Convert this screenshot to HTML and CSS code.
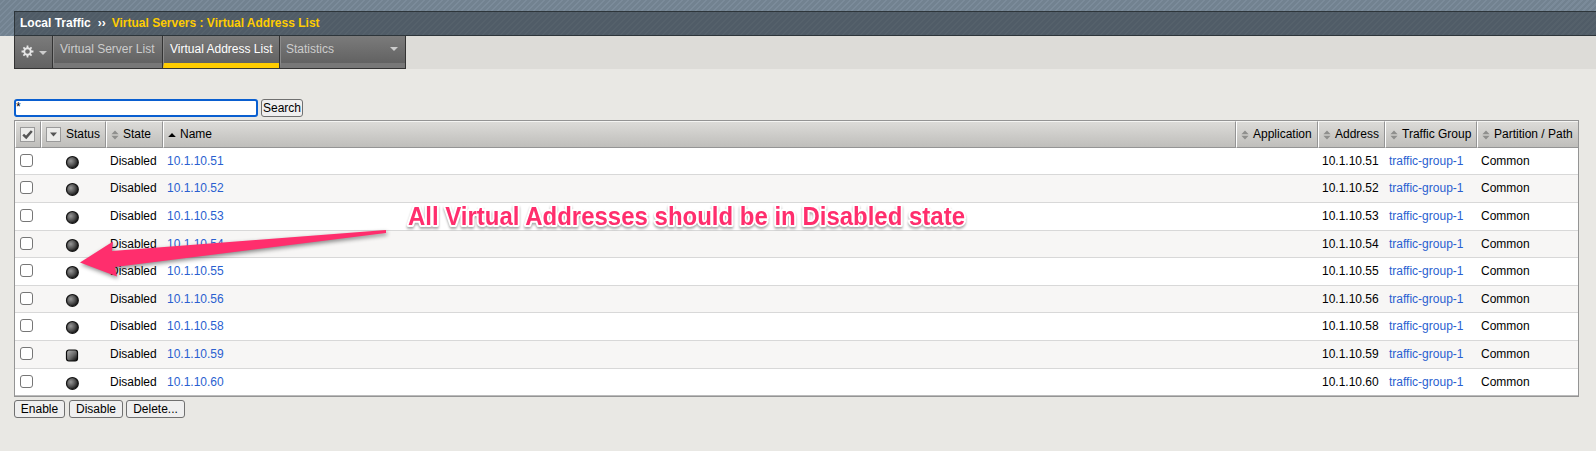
FILE: index.html
```html
<!DOCTYPE html>
<html lang="en">
<head>
<meta charset="utf-8">
<title>Virtual Address List</title>
<link rel="stylesheet" href="styles.css">
</head>
<body>
<svg class="defs" width="0" height="0" aria-hidden="true">
  <defs>
    <radialGradient id="ball" cx="0.36" cy="0.38" r="0.66"><stop offset="0" stop-color="#979797"/><stop offset="0.55" stop-color="#555"/><stop offset="1" stop-color="#151515"/></radialGradient>
    <linearGradient id="box" x1="0" y1="0" x2="1" y2="1"><stop offset="0.1" stop-color="#aaa"/><stop offset="0.55" stop-color="#666"/><stop offset="1" stop-color="#000"/></linearGradient>
    <symbol id="circle" viewBox="0 0 14 14"><circle cx="7.4" cy="7.4" r="5.9" fill="url(#ball)" stroke="#151515" stroke-width="1.2"/></symbol>
    <symbol id="square" viewBox="0 0 14 14"><rect x="1.5" y="2" width="11" height="11" rx="2.4" fill="url(#box)" stroke="#0a0a0a" stroke-width="1.2"/></symbol>
    <symbol id="sort" viewBox="0 0 8 10"><path d="M0.4 4.2 4 0.5 7.6 4.2zM0.4 5.8 4 9.5 7.6 5.8z" fill="#8f8f8d"/></symbol>
  </defs>
</svg>
<header class="top">
  <div class="crumbs"><span>Local Traffic</span><span class="sep">››</span><span class="here">Virtual Servers : Virtual Address List</span></div>
</header>
<nav class="band">
  <div class="tabs">
    <div class="tab gear">
      <svg width="13" height="13" viewBox="0 0 14 14"><g stroke="#e6e6e6" stroke-width="1.9"><path d="M7 0.6v2.8M7 10.6v2.8M0.6 7h2.8M10.6 7h2.8M2.6 2.6l1.9 1.9M9.5 9.5l1.9 1.9M2.6 11.4l1.9-1.9M9.5 4.5l1.9-1.9"/></g><circle cx="7" cy="7" r="3.5" fill="none" stroke="#e6e6e6" stroke-width="2"/></svg>
      <i class="down"></i>
    </div>
    <div class="tab list">Virtual Server List</div>
    <div class="tab active">Virtual Address List</div>
    <div class="tab stats">Statistics<i class="down"></i></div>
  </div>
</nav>
<main class="content">
  <div class="search"><input class="query" type="text" value="*"><button class="btn find">Search</button></div>
  <table class="grid">
    <colgroup><col class="c1"><col class="c2"><col class="c3"><col class="c4"><col class="c5"><col class="c6"><col class="c7"><col class="c8"></colgroup>
    <thead><tr>
      <th><div class="h wide"><span class="mini"><svg width="11" height="11" viewBox="0 0 11 11"><path d="M1.2 5.6 4.2 8.4 9.8 2" fill="none" stroke="#555" stroke-width="2.5"/></svg></span></div></th>
      <th><div class="h wide"><span class="mini"><svg width="9" height="5" viewBox="0 0 9 5"><path d="M1 0.5h7L4.5 4.5z" fill="#555"/></svg></span><span class="status">Status</span></div></th>
      <th><div class="h"><svg class="s" width="8" height="10"><use href="#sort"/></svg>State</div></th>
      <th><div class="h"><svg class="s" width="8" height="10" viewBox="0 0 8 10"><path d="M0.2 7 4 3 7.8 7z" fill="#000"/></svg>Name</div></th>
      <th><div class="h"><svg class="s" width="8" height="10"><use href="#sort"/></svg>Application</div></th>
      <th><div class="h"><svg class="s" width="8" height="10"><use href="#sort"/></svg>Address</div></th>
      <th><div class="h"><svg class="s" width="8" height="10"><use href="#sort"/></svg>Traffic Group</div></th>
      <th><div class="h"><svg class="s" width="8" height="10"><use href="#sort"/></svg>Partition / Path</div></th>
    </tr></thead>
    <tbody>
      <tr class="short"><td><span class="check"></span></td><td class="mark"><svg width="14" height="14"><use href="#circle"/></svg></td><td>Disabled</td><td><a>10.1.10.51</a></td><td></td><td class="addr">10.1.10.51</td><td><a>traffic-group-1</a></td><td>Common</td></tr>
      <tr><td><span class="check"></span></td><td class="mark"><svg width="14" height="14"><use href="#circle"/></svg></td><td>Disabled</td><td><a>10.1.10.52</a></td><td></td><td class="addr">10.1.10.52</td><td><a>traffic-group-1</a></td><td>Common</td></tr>
      <tr><td><span class="check"></span></td><td class="mark"><svg width="14" height="14"><use href="#circle"/></svg></td><td>Disabled</td><td><a>10.1.10.53</a></td><td></td><td class="addr">10.1.10.53</td><td><a>traffic-group-1</a></td><td>Common</td></tr>
      <tr class="short"><td><span class="check"></span></td><td class="mark"><svg width="14" height="14"><use href="#circle"/></svg></td><td>Disabled</td><td><a>10.1.10.54</a></td><td></td><td class="addr">10.1.10.54</td><td><a>traffic-group-1</a></td><td>Common</td></tr>
      <tr><td><span class="check"></span></td><td class="mark"><svg width="14" height="14"><use href="#circle"/></svg></td><td>Disabled</td><td><a>10.1.10.55</a></td><td></td><td class="addr">10.1.10.55</td><td><a>traffic-group-1</a></td><td>Common</td></tr>
      <tr class="short"><td><span class="check"></span></td><td class="mark"><svg width="14" height="14"><use href="#circle"/></svg></td><td>Disabled</td><td><a>10.1.10.56</a></td><td></td><td class="addr">10.1.10.56</td><td><a>traffic-group-1</a></td><td>Common</td></tr>
      <tr><td><span class="check"></span></td><td class="mark"><svg width="14" height="14"><use href="#circle"/></svg></td><td>Disabled</td><td><a>10.1.10.58</a></td><td></td><td class="addr">10.1.10.58</td><td><a>traffic-group-1</a></td><td>Common</td></tr>
      <tr><td><span class="check"></span></td><td class="mark"><svg width="14" height="14"><use href="#square"/></svg></td><td>Disabled</td><td><a>10.1.10.59</a></td><td></td><td class="addr">10.1.10.59</td><td><a>traffic-group-1</a></td><td>Common</td></tr>
      <tr class="short"><td><span class="check"></span></td><td class="mark"><svg width="14" height="14"><use href="#circle"/></svg></td><td>Disabled</td><td><a>10.1.10.60</a></td><td></td><td class="addr">10.1.10.60</td><td><a>traffic-group-1</a></td><td>Common</td></tr>
    </tbody>
  </table>
  <div class="actions"><button class="btn enable">Enable</button><button class="btn disable">Disable</button><button class="btn delete">Delete...</button></div>
</main>
<svg class="note" width="1000" height="300" viewBox="0 0 1000 300">
  <path class="arrow" d="M80 262.5 113 241.5 112 251 386 230 386 233 115 267 117 276.5z"/>
  <text class="caption" x="408" y="225" textLength="557" lengthAdjust="spacingAndGlyphs">All Virtual Addresses should be in Disabled state</text>
</svg>
</body>
</html>
```
FILE: styles.css
```css
* { box-sizing: border-box; }
body { margin: 0; height: 451px; overflow: hidden; background: #e9e8e4; font: 12px "Liberation Sans", Arial, sans-serif; color: #000; }
.defs { position: absolute; }
.top { height: 36px; padding: 11px 0 0 14px; background: repeating-linear-gradient(135deg, #728290 0 2.8px, #7b8b9a 2.8px 4.24px); }
.crumbs { height: 25px; display: flex; align-items: center; padding: 0 0 1px 5px; border: 1px solid #2d353a; border-right: 0; background: repeating-linear-gradient(135deg, #505c67 0 2.8px, #55616b 2.8px 4.24px); color: #fff; font-weight: bold; white-space: nowrap; }
.sep { margin: 0 6px 0 7px; }
.here { color: #fc0; }
.band { height: 33px; padding-left: 14px; background: linear-gradient(90deg, #e9e8e4 14px, #dddcd8 14px); }
.tabs { display: flex; width: 392px; height: 33px; border: 1px solid #333; border-top: 0; background: #333; }
.tab { height: 32px; padding: 6px 0 0 6px; border-left: 1px solid #8a8a8a; border-bottom: 5px solid #777; background: linear-gradient(#7b7b7b, #626262); color: #ccc; white-space: nowrap; margin-right: 1px; }
.gear { width: 37px; display: flex; gap: 5px; padding: 9px 0 0 6px; border: 0; }
.list { width: 109px; }
.active { width: 116px; color: #fff; border-bottom-color: #fc0; }
.stats { width: 125px; margin: 0; display: flex; justify-content: space-between; padding: 6px 7px 0 5px; }
.down { width: 0; height: 0; border: 4px solid transparent; border-top-color: #ccc; border-bottom: 0; margin-top: 6px; }
.stats .down { margin-top: 5px; }
.content { padding: 30px 0 0 14px; }
.search { display: flex; height: 18px; gap: 3px; }
.query { width: 244px; height: 18px; padding: 0 0 3px; border: 2px solid #0a5fd0; border-radius: 3px; outline: 0; background: #fff; font: 12px "Liberation Sans", Arial, sans-serif; }
.btn { height: 18px; padding: 0; border: 1px solid #707070; border-radius: 3px; background: #efefef; color: #000; font: 12px "Liberation Sans", Arial, sans-serif; line-height: 15px; }
.find { width: 42px; }
.grid { width: 1565px; margin-top: 3px; border: 1px solid #949494; border-collapse: separate; border-spacing: 0; table-layout: fixed; background: #fff; }
.c1 { width: 26px; } .c2 { width: 65px; } .c3 { width: 57px; } .c4 { width: 1073px; }
.c5 { width: 82px; } .c6 { width: 67px; } .c7 { width: 92px; } .c8 { width: 101px; }
th { height: 27px; padding: 0; border-top: 1px solid #f4f4f2; border-left: 1px solid #fff; border-right: 1px solid #949494; border-bottom: 1px solid #949494; background: linear-gradient(#dcdbd8, #bfbebb); font-weight: normal; white-space: nowrap; }
th:last-child { border-right: 0; }
.h { height: 25px; display: flex; align-items: center; padding: 0 0 1px 4px; }
.s { margin: 2px 4px 0 0; }
.mini { width: 15px; height: 15px; margin-top: 1px; flex: none; display: flex; align-items: center; justify-content: center; border: 1px solid #9a9a9a; background: #ececea; }
.status { margin-left: 5px; }
td { height: 28px; padding: 0 4px 1px; border-bottom: 1px solid #d8d8d8; vertical-align: middle; line-height: 14px; white-space: nowrap; }
.short td { height: 27px; padding-bottom: 0; }
tr:nth-child(even) td { background: #f7f6f5; }
tr:last-child td { border-bottom-color: #bbb; }
td:first-child { padding-left: 5px; }
td a { color: #2a5fd0; }
td.addr { text-align: right; padding-right: 7px; }
.check { display: block; width: 13px; height: 13px; margin-top: -1px; border: 1px solid #767676; border-radius: 3px; background: #fff; }
.mark svg { display: block; margin: 2px 0 0 20px; }
.actions { display: flex; margin-top: 3px; }
.enable { width: 51px; } .disable { width: 54px; margin-left: 4px; } .delete { width: 59px; margin-left: 3px; }
.note { position: absolute; left: 0; top: 0; pointer-events: none; }
.arrow { fill: #ff2e6d; filter: drop-shadow(1px 2px 2px rgba(0,0,0,.45)); }
.caption { font: bold 25px "Liberation Sans", Arial, sans-serif; fill: #ff2e6d; stroke: #fff; stroke-width: 4px; stroke-linejoin: round; paint-order: stroke; filter: drop-shadow(0 2px 1px rgba(0,0,0,.32)); }
```
